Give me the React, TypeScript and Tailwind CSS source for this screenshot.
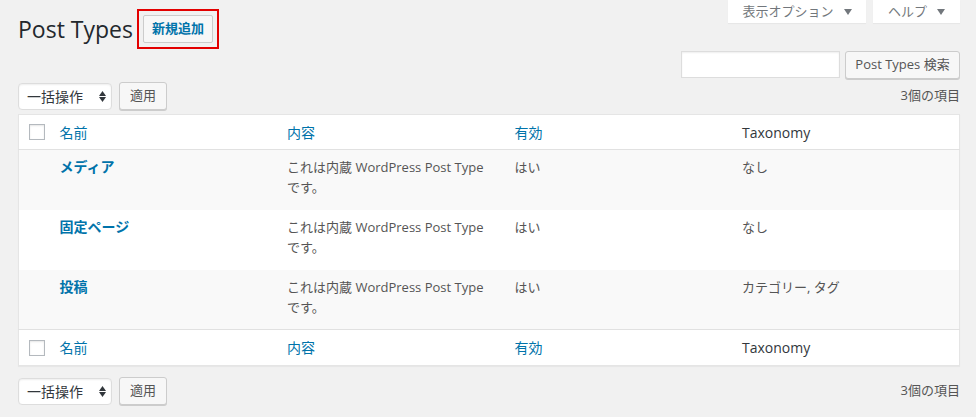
import React from 'react'

const font = { fontFamily: '"Open Sans", "Noto Sans CJK JP", sans-serif' }

const rows = [
  { name: 'メディア', taxonomy: 'なし' },
  { name: '固定ページ', taxonomy: 'なし' },
  { name: '投稿', taxonomy: 'カテゴリー, タグ' },
]

function Checkbox() {
  return (
    <span className="block w-4 h-4 bg-white border border-[#b4b9be] shadow-[inset_0_1px_2px_rgba(0,0,0,0.1)]" />
  )
}

function BulkActions() {
  return (
    <div className="flex items-center gap-[7px]">
      <div className="relative flex items-center w-[94px] h-[27px] bg-white border border-[#ddd] rounded-[4px] shadow-[inset_0_1px_2px_rgba(0,0,0,0.07)] pl-2 text-[14px] text-[#32373c]">
        一括操作
        <span className="absolute right-[5px] top-[7px] flex flex-col items-center leading-none text-[#32373c]">
          <svg width="7" height="5" viewBox="0 0 7 5"><path d="M3.5 0L7 5H0z" fill="currentColor" /></svg>
          <svg width="7" height="5" viewBox="0 0 7 5" className="mt-[1px]"><path d="M0 0h7L3.5 5z" fill="currentColor" /></svg>
        </span>
      </div>
      <button className="h-[28px] px-[10px] bg-[#f7f7f7] border border-[#ccc] rounded-[3px] shadow-[0_1px_0_#ccc] text-[13px] text-[#555]">
        適用
      </button>
    </div>
  )
}

function HeadRow({ border }: { border: 'top' | 'bottom' }) {
  const b = border === 'bottom' ? 'border-b h-[35px]' : 'border-t h-[36px]'
  return (
    <tr className={`bg-white ${b} border-[#e1e1e1]`}>
      <td className="pl-[10px] align-middle">
        <Checkbox />
      </td>
      <td className="px-[10px] text-[14px] text-[#0073aa]">名前</td>
      <td className="px-[10px] text-[14px] text-[#0073aa]">内容</td>
      <td className="px-[10px] text-[14px] text-[#0073aa]">有効</td>
      <td className="px-[10px] text-[14px] text-[#32373c]">Taxonomy</td>
    </tr>
  )
}

export default function App() {
  return (
    <div className="w-[976px] h-[417px] bg-[#f1f1f1] px-[16px] pl-[18px] overflow-hidden" style={font}>
      <div className="flex justify-between items-start h-[49px]">
        <div className="flex items-center mt-[9px] h-[40px]">
          <h1 className="text-[23px] font-normal text-[#23282d] leading-[29px]">Post Types</h1>
          <div className="ml-[4px] border-2 border-[#e30000] p-[4px] h-[40px] flex items-center">
            <button className="h-[28px] px-[8px] bg-[#f7f7f7] border border-[#ccc] rounded-[2px] text-[13px] font-bold text-[#0073aa]">
              新規追加
            </button>
          </div>
        </div>
        <div className="flex gap-[7px]">
          <div className="h-[23px] w-[138px] bg-white shadow-[0_1px_1px_rgba(0,0,0,0.04)] flex items-center justify-center gap-[10px] text-[13px] text-[#72777c]">
            表示オプション
            <svg width="8" height="6" viewBox="0 0 8 6"><path d="M0 0h8L4 6z" fill="currentColor" /></svg>
          </div>
          <div className="h-[23px] w-[87px] bg-white shadow-[0_1px_1px_rgba(0,0,0,0.04)] flex items-center justify-center gap-[10px] text-[13px] text-[#72777c]">
            ヘルプ
            <svg width="8" height="6" viewBox="0 0 8 6"><path d="M0 0h8L4 6z" fill="currentColor" /></svg>
          </div>
        </div>
      </div>

      <div className="flex justify-end gap-[5px] mt-[2px]">
        <input className="w-[159px] h-[27px] bg-white border border-[#ddd] shadow-[inset_0_1px_2px_rgba(0,0,0,0.07)]" />
        <button className="h-[28px] w-[115px] bg-[#f7f7f7] border border-[#ccc] rounded-[3px] shadow-[0_1px_0_#ccc] text-[13px] text-[#555]">
          Post Types 検索
        </button>
      </div>

      <div className="flex justify-between items-center mt-[3px]">
        <BulkActions />
        <span className="text-[13px] text-[#555]">3個の項目</span>
      </div>

      <table className="w-full table-fixed border-collapse border border-[#e5e5e5] shadow-[0_1px_1px_rgba(0,0,0,0.04)] mt-[4px] text-left">
        <colgroup>
          <col className="w-[31px]" />
          <col />
          <col />
          <col />
          <col />
        </colgroup>
        <thead>
          <HeadRow border="bottom" />
        </thead>
        <tbody>
          {rows.map((r, i) => (
            <tr key={r.name} className={`h-[60px] align-top ${i % 2 === 0 ? 'bg-[#f9f9f9]' : 'bg-white'}`}>
              <td />
              <td className="px-[10px] pt-[7px] text-[14px] font-bold text-[#0073aa] leading-5">{r.name}</td>
              <td className="px-[10px] pt-[7px] text-[13px] text-[#555] leading-5">
                これは内蔵 WordPress Post Type
                <br />
                です。
              </td>
              <td className="px-[10px] pt-[7px] text-[13px] text-[#555] leading-5">はい</td>
              <td className="px-[10px] pt-[7px] text-[13px] text-[#555] leading-5">{r.taxonomy}</td>
            </tr>
          ))}
        </tbody>
        <tfoot>
          <HeadRow border="top" />
        </tfoot>
      </table>

      <div className="flex justify-between items-center mt-[11px]">
        <BulkActions />
        <span className="text-[13px] text-[#555]">3個の項目</span>
      </div>
    </div>
  )
}
